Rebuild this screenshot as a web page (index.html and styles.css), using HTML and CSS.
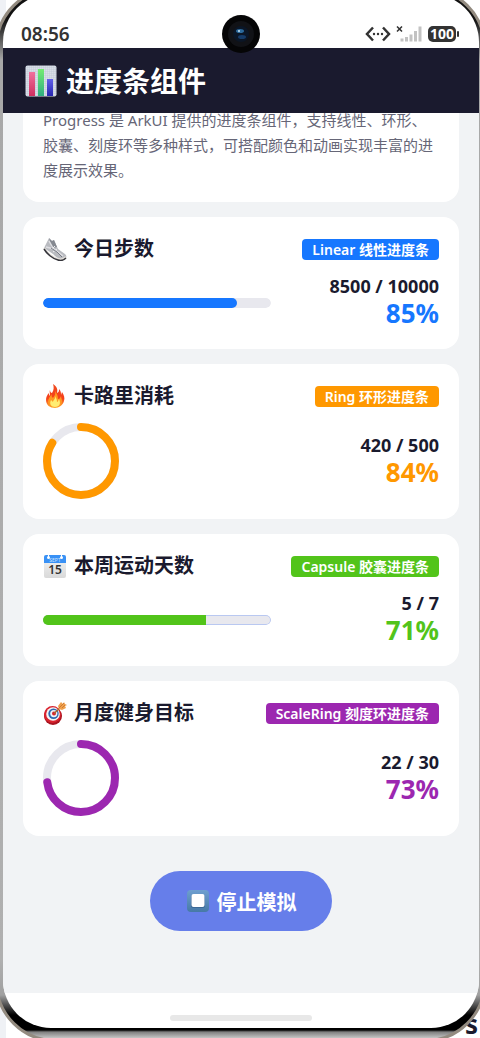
FILE: index.html
```html
<!DOCTYPE html>
<html lang="zh-CN">

<head>
    <meta charset="UTF-8">
    <meta name="viewport" content="width=device-width, initial-scale=1">
    <title>进度条组件</title>
    <link rel="stylesheet" href="styles.css">
</head>

<body>
    <div class="backdrop">s</div>
    <div class="phone">
        <div class="screen">
            <!-- Status bar -->
            <div class="status-bar">
                <span class="clock">08:56</span>
                <svg class="camera" viewBox="0 0 38 38">
                    <circle cx="19" cy="19" r="19" fill="#050506" />
                    <circle cx="19" cy="19" r="13" fill="#111216" />
                    <circle cx="19" cy="19" r="8" fill="#0b1626" />
                    <ellipse cx="18" cy="16" rx="4" ry="2" fill="#2c6a9c" />
                    <circle cx="17" cy="16" r="1" fill="#c8e6f5" />
                    <ellipse cx="20" cy="22" rx="4" ry="2" fill="#153b68" />
                </svg>
                <div class="status-icons">
                    <svg width="26" height="16" viewBox="0 0 26 16">
                        <path d="M8 1.5L2 8l6 6.5M18 1.5L24 8l-6 6.5" fill="none" stroke="#333" stroke-width="2.5" />
                        <circle cx="9" cy="8" r="1.2" fill="#333" />
                        <circle cx="13" cy="8" r="1.2" fill="#333" />
                        <circle cx="17" cy="8" r="1.2" fill="#333" />
                    </svg>
                    <svg width="27" height="16" viewBox="0 0 27 16">
                        <path d="M1 .5l5 5M6 .5l-5 5" stroke="#333" stroke-width="1.5" />
                        <path d="M6 12.5v3M10.500 11v4.500M15 8.500v7M19.500 5v10.500M24 .5v15" stroke="#c2c2c2" stroke-width="3" />
                    </svg>
                    <span class="battery">100</span>
                </div>
            </div>

            <header class="header">
                <svg class="header-icon" viewBox="0 0 32 32">
                    <defs>
                        <pattern id="grid" width="2" height="2" patternUnits="userSpaceOnUse">
                            <rect width="2" height="2" fill="#d9dfe8" />
                            <path d="M0 0h2M0 0v2" stroke="#bcc4d2" stroke-width=".7" />
                        </pattern>
                        <linearGradient id="red" x2="0" y2="1"><stop stop-color="#f0709e" /><stop offset="1" stop-color="#cf2f60" /></linearGradient>
                        <linearGradient id="green" x2="0" y2="1"><stop stop-color="#74ec72" /><stop offset="1" stop-color="#2fae80" /></linearGradient>
                        <linearGradient id="blue" x2="0" y2="1"><stop stop-color="#6260ea" /><stop offset="1" stop-color="#2726b0" /></linearGradient>
                    </defs>
                    <rect x=".5" y=".5" width="31" height="31" rx="2" fill="url(#grid)" />
                    <rect x="4" y="7" width="6" height="24" fill="url(#red)" />
                    <rect x="13" y="4" width="6" height="27" fill="url(#green)" />
                    <rect x="22" y="14" width="6" height="17" fill="url(#blue)" />
                </svg>
                <h1 class="title">进度条组件</h1>
            </header>

            <main class="content">
                <section class="card intro">
                    <p>Progress 是 ArkUI 提供的进度条组件，支持线性、环形、胶囊、刻度环等多种样式，可搭配颜色和动画实现丰富的进度展示效果。</p>
                </section>

                <!-- Steps -->
                <section class="card blue">
                    <div class="card-header">
                        <svg class="icon" viewBox="0 0 24 24">
                            <path d="M1 11L6 1l3 3 2-1 4 9 7 5c2 2 2 4-1 5-5 1-8-2-11-5z" fill="#b9bbc0" />
                            <path d="M6 1l3 3 2-1 3 7-5 1z" fill="#858991" />
                            <path d="M6 4l4 7M3 10l8 2 9 7" stroke="#dedee2" stroke-width="1.5" fill="none" />
                            <path d="M12 9l-3 3M14 12l-4 3" stroke="#eeeef0" fill="none" />
                            <path d="M8 11l6 4 5 5" stroke="#777b84" fill="none" />
                            <path d="M1 11c3 5 9 10 14 11 3 1 6 0 8-2" stroke="#e3dfda" stroke-width="2" fill="none" />
                            <path d="M1 12c3 5 9 10 14 11 3 1 6 0 8-2" stroke="#34343a" stroke-width="1.5" fill="none" />
                        </svg>
                        <h2 class="card-title">今日步数</h2>
                        <span class="badge">Linear 线性进度条</span>
                    </div>
                    <div class="card-body">
                        <progress class="bar" value="85" max="100" aria-label="今日步数"></progress>
                        <div class="stats">
                            <div class="value">8500 / 10000</div>
                            <div class="percent">85%</div>
                        </div>
                    </div>
                </section>

                <!-- Calories -->
                <section class="card orange">
                    <div class="card-header">
                        <svg class="icon" viewBox="0 0 24 24">
                            <defs>
                                <linearGradient id="flame" x2="0" y2="1"><stop stop-color="#ef4b20" /><stop offset=".6" stop-color="#f5401a" /><stop offset="1" stop-color="#ffae32" /></linearGradient>
                            </defs>
                            <path d="M10 0c4 3 5 5 4 9 2-1 2-2 2-4 2 2 2 4 2 6l1-3c2 3 3 6 2 9-1 4-5 7-9 7-5 0-9-3-9-8 0-3 1-5 3-7v3c2-2 0-3 1-6 0 2 1 3 2 3 2-3 2-6 1-9z" fill="url(#flame)" />
                            <path d="M12 7c1 4-1 5-2 7-1-1-2-2-1-4-3 3-4 6-4 8 0 3 3 5 7 5s7-2 7-6c0-2-1-3-1-5-1 2-1 3-3 3 0-3-1-5-3-8z" fill="#ff9820" />
                            <path d="M12 12c1 3-2 4-2 6l-2-2c-2 4 0 7 4 7 5 0 6-4 4-8-1 2-1 3-2 3 0-3-1-4-2-6z" fill="#ffed72" />
                        </svg>
                        <h2 class="card-title">卡路里消耗</h2>
                        <span class="badge">Ring 环形进度条</span>
                    </div>
                    <div class="card-body">
                        <svg class="ring" viewBox="0 0 76 76" role="img" aria-label="84%">
                            <circle class="ring-track" cx="38" cy="38" r="34" />
                            <circle class="ring-value" cx="38" cy="38" r="34" pathLength="100" stroke-dasharray="84 100" />
                        </svg>
                        <div class="stats">
                            <div class="value">420 / 500</div>
                            <div class="percent">84%</div>
                        </div>
                    </div>
                </section>

                <!-- Workout days -->
                <section class="card green">
                    <div class="card-header">
                        <svg class="icon" viewBox="0 0 24 24">
                            <defs>
                                <linearGradient id="paper" x2="0" y2="1"><stop stop-color="#f5f5f5" /><stop offset="1" stop-color="#d9d9d9" /></linearGradient>
                            </defs>
                            <rect x="1" y="1" width="22" height="23" rx="2" fill="url(#paper)" />
                            <path d="M1 9V3q0-2 2-2h18q2 0 2 2v6z" fill="#3991f5" />
                            <circle cx="5.5" cy="3.5" r="1.5" fill="#fff" />
                            <circle cx="18.5" cy="3.5" r="1.5" fill="#fff" />
                            <path d="M5.5 0v4M18.5 0v4" stroke="#fff" />
                            <text class="cal-month" x="12" y="8">SEPT</text>
                            <text class="cal-day" x="12" y="20">15</text>
                        </svg>
                        <h2 class="card-title">本周运动天数</h2>
                        <span class="badge">Capsule 胶囊进度条</span>
                    </div>
                    <div class="card-body">
                        <progress class="bar capsule" value="5" max="7" aria-label="本周运动天数"></progress>
                        <div class="stats">
                            <div class="value">5 / 7</div>
                            <div class="percent">71%</div>
                        </div>
                    </div>
                </section>

                <!-- Monthly goal -->
                <section class="card purple">
                    <div class="card-header">
                        <svg class="icon" viewBox="0 0 24 24">
                            <circle cx="10" cy="15" r="9" fill="#a81420" />
                            <circle cx="9.5" cy="13.5" r="8.5" fill="#d9222e" />
                            <circle cx="10" cy="13" r="6.8" fill="#f4f4f4" />
                            <circle cx="10.5" cy="12.8" r="5.2" fill="#2d69b3" />
                            <circle cx="10.8" cy="12.6" r="3.6" fill="#eef2f6" />
                            <circle cx="11" cy="12.5" r="2" fill="#d9222e" />
                            <path d="M11 12.5L19 5" stroke="#a8672f" stroke-width="1.5" />
                            <path d="M15 5l3-4 2 2 1-2 1 2 2 1-2 1 1 2-4 2-3-1z" fill="#efa04b" />
                            <path d="M16 7l5-5M19 7l3-3" stroke="#c46f2c" stroke-width=".8" />
                        </svg>
                        <h2 class="card-title">月度健身目标</h2>
                        <span class="badge">ScaleRing 刻度环进度条</span>
                    </div>
                    <div class="card-body">
                        <svg class="ring" viewBox="0 0 76 76" role="img" aria-label="73%">
                            <circle class="ring-track" cx="38" cy="38" r="34" />
                            <circle class="ring-value" cx="38" cy="38" r="34" pathLength="100" stroke-dasharray="73 100" />
                        </svg>
                        <div class="stats">
                            <div class="value">22 / 30</div>
                            <div class="percent">73%</div>
                        </div>
                    </div>
                </section>

                <button class="stop-button" type="button">
                    <svg class="icon" viewBox="0 0 24 24">
                        <defs>
                            <linearGradient id="stop" x2="0" y2="1"><stop stop-color="#6e9fd0" /><stop offset="1" stop-color="#4679a6" /></linearGradient>
                        </defs>
                        <rect x="1" y="1" width="22" height="22" rx="4" fill="url(#stop)" />
                        <rect x="5" y="6" width="14" height="13" rx="2" fill="#3c6996" />
                        <rect x="5.5" y="5" width="13" height="13" rx="2" fill="#fff" />
                    </svg>
                    停止模拟
                </button>
            </main>

            <div class="nav-bar"><span class="nav-handle"></span></div>
        </div>
    </div>
</body>

</html>
```

FILE: styles.css
```css
:root {
    --text-primary: #1a1a2e;
    --text-secondary: #666677;
    --track: #e8e8ee;
    --page-bg: #f1f3f5;
}

* {
    box-sizing: border-box;
}

html {
    overflow: hidden;
}

body {
    position: relative;
    height: 100vh;
    margin: 0;
    overflow: hidden;
    background: linear-gradient(to right, #eff1f5 6px, #ffffff 6px);
    color: var(--text-primary);
    font-family: "Noto Sans", "Noto Sans CJK SC", sans-serif;
}

h1,
h2,
p {
    margin: 0;
}

.backdrop {
    position: absolute;
    right: 2px;
    bottom: 0;
    font-size: 26px;
    font-weight: 700;
    line-height: 28px;
}

/* Device frame, slightly larger than the window */
.phone {
    position: relative;
    height: calc(100vh + 17px);
    margin: -13px -6px 0 -5px;
    padding: 4px 4px 11px 5px;
    border: 3px solid #938b80;
    border-radius: 60px;
    background: linear-gradient(to top, #d0d0d0 0, #808080 7px, #000000 9px, #000000 24px, #a0a0a0 44px, #b0b0b0 80px, #a8a8a8 calc(100% - 70px), #111111 calc(100% - 30px));
}

.screen {
    display: flex;
    flex-direction: column;
    height: 100%;
    overflow: hidden;
    border-radius: 48px;
    background: #ffffff;
}

.status-bar {
    position: relative;
    z-index: 2;
    display: flex;
    align-items: center;
    justify-content: space-between;
    height: 54px;
    padding: 26px 23px 0 18px;
    flex-shrink: 0;
}

.clock {
    color: #333333;
    font-size: 19px;
    font-weight: 600;
    line-height: 24px;
}

.camera {
    position: absolute;
    left: 50%;
    bottom: -5px;
    width: 38px;
    height: 38px;
    margin-left: -19px;
}

.status-icons {
    display: flex;
    align-items: center;
    gap: 5px;
}

.battery {
    position: relative;
    width: 28px;
    border-radius: 5px;
    background: #333333;
    color: #ffffff;
    font-size: 14px;
    font-weight: 700;
    line-height: 16px;
    text-align: center;
}

.battery::after {
    content: "";
    position: absolute;
    top: 5px;
    right: -3px;
    width: 2px;
    height: 6px;
    border-radius: 1px;
    background: #333333;
}

.header {
    position: relative;
    display: flex;
    align-items: center;
    gap: 9px;
    height: 65px;
    padding: 0 22px;
    flex-shrink: 0;
    background: var(--text-primary);
    color: #ffffff;
}

.header-icon {
    width: 32px;
    height: 32px;
}

.title {
    font-size: 28px;
    font-weight: 700;
    line-height: 40px;
}

.content {
    display: flex;
    flex: 1;
    flex-direction: column;
    gap: 15px;
    min-height: 0;
    padding: 0 20px;
    overflow: hidden;
    background: var(--page-bg);
}

.card {
    flex-shrink: 0;
    padding: 20px;
    border-radius: 16px;
    background: #ffffff;
}

/* Scrolled partly under the header */
.intro {
    margin-top: -25px;
    padding-bottom: 19px;
    color: var(--text-secondary);
    font-size: 15px;
    line-height: 25px;
}

.card-header {
    display: flex;
    align-items: center;
    height: 24px;
    margin-bottom: 15px;
}

.icon {
    width: 24px;
    height: 24px;
    margin-right: 7px;
    flex-shrink: 0;
}

.cal-month {
    fill: #cfe4ff;
    font-size: 5px;
    text-anchor: middle;
}

.cal-day {
    fill: #333333;
    font-size: 12px;
    font-weight: 600;
    text-anchor: middle;
}

.card-title {
    font-size: 20px;
    font-weight: 700;
    line-height: 24px;
}

.badge {
    margin-left: auto;
    padding: 0 10px;
    border-radius: 4px;
    background: var(--accent);
    color: #ffffff;
    font-size: 14px;
    font-weight: 600;
    line-height: 21px;
}

.card-body {
    display: flex;
    align-items: center;
    justify-content: space-between;
    min-height: 53px;
}

.blue {
    --accent: #1677ff;
}

.orange {
    --accent: #ff9800;
}

.green {
    --accent: #52c41a;
}

.purple {
    --accent: #9c27b0;
}

.bar {
    appearance: none;
    width: calc(58% - 2px);
    height: 10px;
    border: none;
    border-radius: 5px;
    overflow: hidden;
}

.bar::-webkit-progress-bar {
    border-radius: 5px;
    background: var(--track);
}

.bar::-webkit-progress-value {
    border-radius: 5px;
    background: var(--accent);
}

.capsule::-webkit-progress-bar {
    box-shadow: inset 0 0 0 1px #b9c8f1;
}

.capsule::-webkit-progress-value {
    border-radius: 0;
}

.ring {
    width: 76px;
    height: 76px;
}

.ring circle {
    fill: none;
    stroke-width: 8;
}

.ring .ring-track {
    stroke: var(--track);
}

.ring .ring-value {
    stroke: var(--accent);
    stroke-linecap: round;
    transform: rotate(-90deg);
    transform-origin: center;
}

.stats {
    text-align: right;
}

.value {
    font-size: 18px;
    font-weight: 700;
    line-height: 21px;
}

.percent {
    color: var(--accent);
    font-size: 26px;
    font-weight: 700;
    line-height: 32px;
}

.stop-button {
    display: flex;
    align-items: center;
    justify-content: center;
    align-self: center;
    flex-shrink: 0;
    width: 182px;
    height: 60px;
    margin-top: 20px;
    padding: 0;
    border: none;
    border-radius: 30px;
    background: #667eea;
    color: #ffffff;
    font-family: inherit;
    font-size: 20px;
    font-weight: 600;
    cursor: pointer;
}

.nav-bar {
    display: flex;
    align-items: center;
    justify-content: center;
    height: 35px;
    padding-top: 14px;
    flex-shrink: 0;
}

.nav-handle {
    width: 30%;
    height: 6px;
    border-radius: 3px;
    background: #e8e8e8;
}
```
